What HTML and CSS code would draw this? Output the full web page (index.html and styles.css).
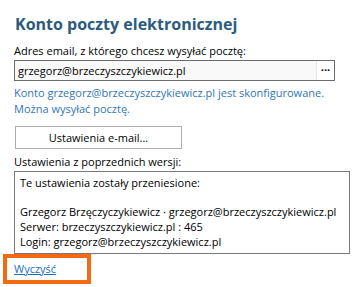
FILE: index.html
```html
<!DOCTYPE html>
<html lang="pl">
<head>
  <meta charset="UTF-8" />
  <title>Konto poczty elektronicznej</title>
  <link rel="stylesheet" href="styles.css">
</head>
<body>
  <div class="panel">
    <h1 class="title">Konto poczty elektronicznej</h1>

    <div class="label">Adres email, z którego chcesz wysyłać pocztę:</div>
    <div class="email-field">
      <div class="email-value">grzegorz@brzeczyszczykiewicz.pl</div>
      <div class="email-more">···</div>
    </div>

    <div class="status">
      Konto grzegorz@brzeczyszczykiewicz.pl jest skonfigurowane.<br>
      Można wysyłać pocztę.
    </div>

    <button class="settings-btn">Ustawienia e-mail...</button>

    <div class="label">Ustawienia z poprzednich wersji:</div>
    <div class="legacy">
      <div>Te ustawienia zostały przeniesione:</div>
      <div class="blank"></div>
      <div>Grzegorz Brzęczyczykiewicz · grzegorz@brzeczyszczykiewicz.pl</div>
      <div>Serwer: brzeczyszczykiewicz.pl : 465</div>
      <div>Login: grzegorz@brzeczyszczykiewicz.pl</div>
    </div>

    <div class="clear-box">
      <a class="clear-link" href="#">Wyczyść</a>
    </div>
  </div>
</body>
</html>
```

FILE: styles.css
```css
body {
  margin: 0;
  background: #fff;
  font-family: 'Open Sans', 'Noto Sans', sans-serif;
  font-size: 11px;
  color: #000;
}
.panel {
  padding: 13px 0 0 14px;
}
.title {
  margin: 0 0 8px 1px;
  font-size: 16px;
  font-weight: 700;
  color: #2c5b80;
  line-height: 22px;
}
.label {
  line-height: 15px;
}
.email-field {
  display: flex;
  width: 319px;
  height: 19px;
  border: 1px solid #6b6b6b;
  margin-top: 2px;
}
.email-value {
  flex: 1;
  background: #f9f9f9;
  padding-left: 3px;
  line-height: 19px;
  border-right: 1px solid #e6e6e6;
}
.email-more {
  width: 17px;
  text-align: center;
  font-weight: 700;
  line-height: 18px;
  background: #fff;
}
.status {
  color: #2f77b5;
  line-height: 16px;
  margin-top: 4px;
}
.settings-btn {
  display: block;
  margin: 9px 0 5px 1px;
  width: 167px;
  height: 23px;
  border: 1px solid #adadad;
  background: #fff;
  font-family: inherit;
  font-size: 11px;
  color: #000;
}
.legacy {
  width: 329px;
  border: 1px solid #7a7a7a;
  padding: 3px 0 4px 5px;
  line-height: 15px;
  margin-top: 2px;
}
.blank {
  height: 14px;
}
.clear-box {
  margin: 0 0 0 -11px;
  width: 73px;
  height: 22px;
  border: 4px solid #f26b12;
  padding-left: 7px;
  line-height: 22px;
}
.clear-link {
  color: #1a6ec7;
}
```
